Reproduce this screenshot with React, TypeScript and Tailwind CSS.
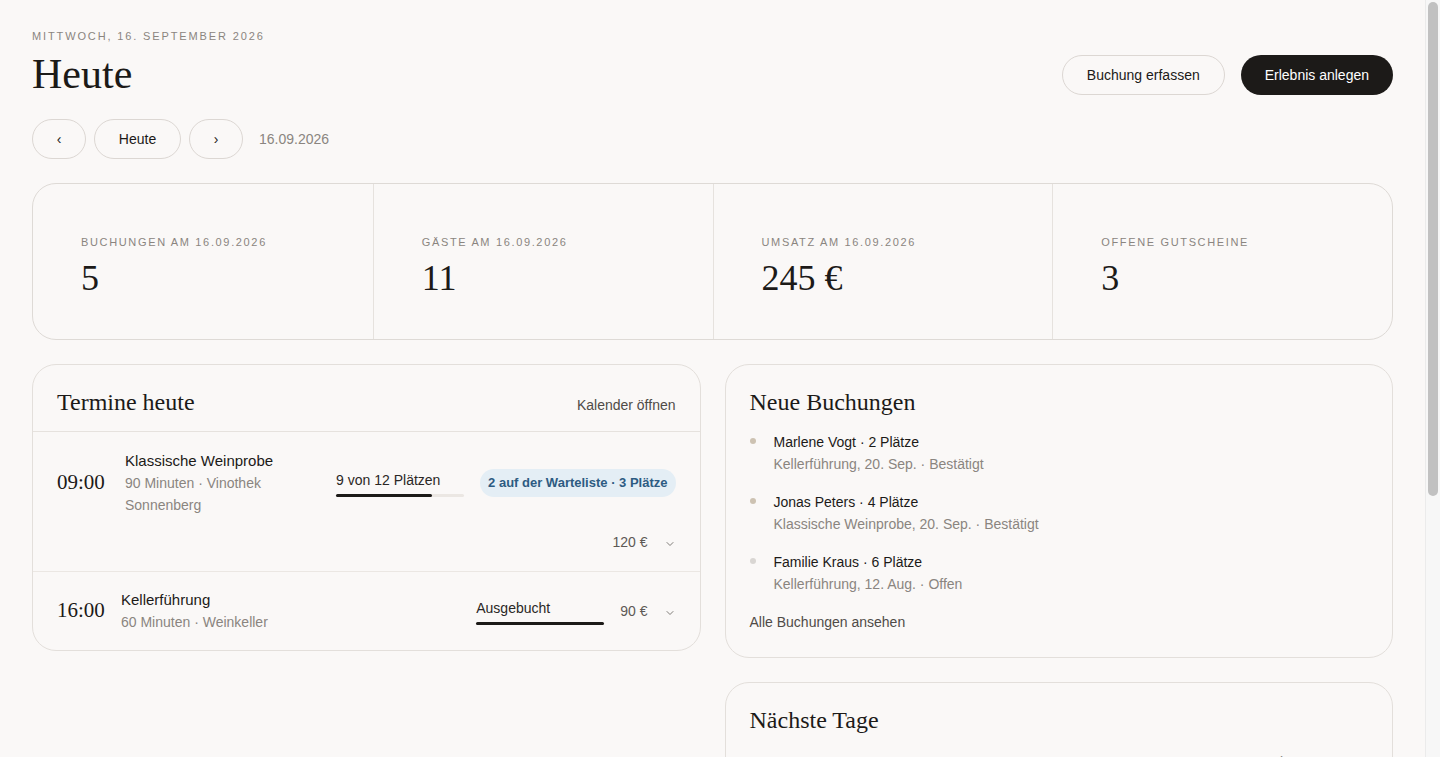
import { ChevronDown } from "lucide-react";

const serif = "font-['Georgia','Liberation_Serif',serif]";
const sans = "font-['Liberation_Sans',Arial,sans-serif]";

type Stat = { label: string; value: string };

const stats: Stat[] = [
  { label: "Buchungen am 16.09.2026", value: "5" },
  { label: "Gäste am 16.09.2026", value: "11" },
  { label: "Umsatz am 16.09.2026", value: "245 €" },
  { label: "Offene Gutscheine", value: "3" },
];

type Booking = { name: string; detail: string; open?: boolean };

const bookings: Booking[] = [
  { name: "Marlene Vogt · 2 Plätze", detail: "Kellerführung, 20. Sep. · Bestätigt" },
  { name: "Jonas Peters · 4 Plätze", detail: "Klassische Weinprobe, 20. Sep. · Bestätigt" },
  { name: "Familie Kraus · 6 Plätze", detail: "Kellerführung, 12. Aug. · Offen", open: true },
];

const nextDays = [
  { day: "Donnerstag, 20. August", info: "2 Termine · 20 Gäste" },
  { day: "Freitag, 21. August", info: "3 Termine · 26 Gäste" },
  { day: "Samstag, 22. August", info: "4 Termine · 38 Gäste" },
  { day: "Sonntag, 23. August", info: "1 Termin · 8 Gäste" },
  { day: "Montag, 24. August", info: "Keine Termine" },
];

function Capacity({ label, filled }: { label: string; filled: number }) {
  return (
    <div className="w-32 shrink-0">
      <div className="text-sm text-[#2a2725] leading-5">{label}</div>
      <div className="mt-1 h-[3px] w-full rounded-full bg-[#ebe7e3]">
        <div
          className="h-full rounded-full bg-[#1c1a18]"
          style={{ width: `${filled * 100}%` }}
        />
      </div>
    </div>
  );
}

function PriceToggle({ price }: { price: string }) {
  return (
    <div className="flex items-center gap-4 shrink-0">
      <span className="text-sm text-[#5d5955]">{price}</span>
      <ChevronDown className="h-3 w-3 mt-1 text-[#6e6a66]" strokeWidth={1.75} />
    </div>
  );
}

export default function App() {
  return (
    <div className={`flex h-screen bg-[#faf8f7] text-[#1c1a18] ${sans}`}>
      <main className="min-w-0 flex-1 overflow-y-auto px-8 pt-[30px] pb-[160px]">
        {/* Kopfzeile */}
        <div className="flex items-start justify-between">
          <div>
            <div className="text-[11px] uppercase tracking-[0.17em] text-[#8a8580] leading-3">
              Mittwoch, 16. September 2026
            </div>
            <h1 className={`${serif} mt-[10px] text-[42px] leading-[44px] text-[#1c1a18]`}>
              Heute
            </h1>
          </div>
          <div className="mt-[25px] flex items-center gap-4">
            <button className="h-10 rounded-full border border-[#dcd7d3] px-6 text-sm text-[#1c1a18]">
              Buchung erfassen
            </button>
            <button className="h-10 rounded-full bg-[#1c1a18] px-6 text-sm text-white">
              Erlebnis anlegen
            </button>
          </div>
        </div>

        <div className="mt-[23px] flex items-center gap-2">
          <button className="h-10 w-[54px] rounded-full border border-[#dcd7d3] text-sm">‹</button>
          <button className="h-10 w-[87px] rounded-full border border-[#dcd7d3] text-sm">Heute</button>
          <button className="h-10 w-[54px] rounded-full border border-[#dcd7d3] text-sm">›</button>
          <span className="ml-2 text-sm text-[#8a8580]">16.09.2026</span>
        </div>

        {/* Kennzahlen */}
        <div className="mt-6 grid grid-cols-4 rounded-3xl border border-[#dedad6]">
          {stats.map((s, i) => (
            <div
              key={s.label}
              className={`h-[155px] pl-12 pt-[52px] ${i > 0 ? "border-l border-[#e6e2de]" : ""}`}
            >
              <div className="text-[11px] uppercase tracking-[0.15em] text-[#8a8580] leading-3">
                {s.label}
              </div>
              <div className={`${serif} mt-[10px] text-[36px] leading-10`}>{s.value}</div>
            </div>
          ))}
        </div>

        <div className="mt-6 grid grid-cols-2 items-start gap-6">
          {/* Termine heute */}
          <div className="rounded-3xl border border-[#e3dfdb]">
            <div className="flex h-[67px] items-baseline justify-between border-b border-[#e6e2de] px-6 pt-[23px]">
              <h2 className={`${serif} text-[24px] leading-7`}>Termine heute</h2>
              <span className="text-sm text-[#4f4b47]">Kalender öffnen</span>
            </div>

            <div className="border-b border-[#ebe7e3] px-6 pt-[18px] pb-[19px]">
              <div className="flex items-center gap-4">
                <div className={`${serif} w-[52px] text-[21px]`}>09:00</div>
                <div className="min-w-0 flex-1">
                  <div className="text-[15px] leading-[22px]">Klassische Weinprobe</div>
                  <div className="text-sm leading-[22px] text-[#8a8580] pr-8">
                    90 Minuten · Vinothek Sonnenberg
                  </div>
                </div>
                <Capacity label="9 von 12 Plätzen" filled={0.75} />
                <span className="rounded-full bg-[#e4eef5] px-2 py-1 text-[13px] font-bold text-[#2d5b82]">
                  2 auf der Warteliste · 3 Plätze
                </span>
              </div>
              <div className="mt-4 flex justify-end">
                <PriceToggle price="120 €" />
              </div>
            </div>

            <div className="flex items-center gap-4 px-6 py-[17px]">
              <div className={`${serif} w-12 text-[21px]`}>16:00</div>
              <div className="min-w-0 flex-1">
                <div className="text-[15px] leading-[22px]">Kellerführung</div>
                <div className="text-sm leading-[22px] text-[#8a8580]">60 Minuten · Weinkeller</div>
              </div>
              <Capacity label="Ausgebucht" filled={1} />
              <PriceToggle price="90 €" />
            </div>
          </div>

          <div className="flex flex-col gap-6">
            {/* Neue Buchungen */}
            <div className="rounded-3xl border border-[#e3dfdb] px-6 pt-[23px] pb-[25px]">
              <h2 className={`${serif} text-[24px] leading-7`}>Neue Buchungen</h2>
              <ul className="mt-[15px] flex flex-col gap-4">
                {bookings.map((b) => (
                  <li key={b.name} className="flex gap-[18px]">
                    <span
                      className={`mt-[7px] h-[6px] w-[6px] shrink-0 rounded-full ${
                        b.open ? "bg-[#d9d6d3]" : "bg-[#cdc2b2]"
                      }`}
                    />
                    <div>
                      <div className="text-sm leading-[22px]">{b.name}</div>
                      <div className="text-sm leading-[22px] text-[#8a8580]">{b.detail}</div>
                    </div>
                  </li>
                ))}
              </ul>
              <div className="mt-[17px] text-sm text-[#4f4b47]">Alle Buchungen ansehen</div>
            </div>

            {/* Nächste Tage */}
            <div className="rounded-3xl border border-[#e3dfdb] px-6 pt-[23px] pb-6">
              <h2 className={`${serif} text-[24px] leading-7`}>Nächste Tage</h2>
              <ul className="mt-[6px] flex flex-col">
                {nextDays.map((d) => (
                  <li key={d.day} className="flex items-center justify-between py-3 text-sm">
                    <span>{d.day}</span>
                    <span className="text-[#8a8580]">{d.info}</span>
                  </li>
                ))}
              </ul>
            </div>
          </div>
        </div>
      </main>

      {/* Bildlaufleiste */}
      <div className="w-[15px] shrink-0 border-l border-[#ebebeb] bg-[#f7f7f7] px-[2px] pt-[2px]">
        <div className="h-[494px] rounded-full bg-[#c1c1c1]" />
      </div>
    </div>
  );
}
